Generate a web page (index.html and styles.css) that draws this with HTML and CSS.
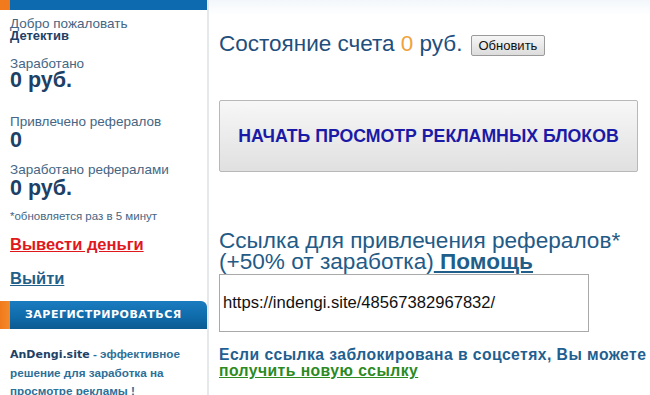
FILE: index.html
```
<!DOCTYPE html>
<html lang="ru">
<head>
<meta charset="utf-8">
<title>AnDengi</title>
<link rel="stylesheet" href="styles.css">
</head>
<body>
<div class="page">
  <aside class="sidebar">
    <div class="side-head"></div>
    <div class="side-body">
      <div class="label">Добро пожаловать</div>
      <div class="user">Детектив</div>
      <div class="label gap1">Заработано</div>
      <div class="value">0 руб.</div>
      <div class="label gap2">Привлечено рефералов</div>
      <div class="value v2">0</div>
      <div class="label gap3">Заработано рефералами</div>
      <div class="value v2">0 руб.</div>
      <div class="note">*обновляется раз в 5 минут</div>
      <a class="withdraw" href="#">Вывести деньги</a>
      <a class="logout" href="#">Выйти</a>
    </div>
    <div class="reg-head">ЗАРЕГИСТРИРОВАТЬСЯ</div>
    <p class="about"><b>AnDengi.site</b> - эффективное решение для заработка на просмотре рекламы !</p>
  </aside>
  <main class="main">
    <div class="balance">
      <span>Состояние счета <span class="zero">0</span> руб.</span>
      <button class="refresh" type="button">Обновить</button>
    </div>
    <button class="start" type="button">НАЧАТЬ ПРОСМОТР РЕКЛАМНЫХ БЛОКОВ</button>
    <div class="ref-title">Ссылка для привлечения рефералов*<br>(+50% от заработка)<a class="help" href="#"> Помощь</a></div>
    <div class="ref-box">https://indengi.site/48567382967832/</div>
    <div class="blocked">Если ссылка заблокирована в соцсетях, Вы можете<br><a class="newlink" href="#">получить новую ссылку</a></div>
  </main>
</div>
</body>
</html>
```

FILE: styles.css
```
* { box-sizing: border-box; }
html, body { margin: 0; padding: 0; background: #fff; }
body {
  font-family: "Liberation Sans", Arial, sans-serif;
  width: 650px;
  height: 395px;
  overflow: hidden;
}
.page {
  display: flex;
  align-items: flex-start;
  height: 395px;
  overflow: hidden;
}
.sidebar {
  width: 209px;
  flex: none;
  border-right: 2px solid #e6e9ec;
  height: 395px;
  display: flex;
  flex-direction: column;
}
.sidebar > * { flex-shrink: 0; }
.side-head {
  height: 10px;
  background: linear-gradient(to right, #f07a1c 0, #f07a1c 10px, #0d6aae 10px, #0d6aae 100%);
}
.side-body {
  display: flex;
  flex-direction: column;
  align-items: flex-start;
  padding: 7px 0 0 10px;
}
.label {
  font-size: 13.5px;
  line-height: 13px;
  color: #456684;
}
.user {
  font-size: 13px;
  font-weight: bold;
  line-height: 12px;
  color: #1d4166;
}
.gap1 { margin-top: 15px; }
.gap2 { margin-top: 25px; }
.gap3 { margin-top: 13px; }
.value {
  font-size: 21.5px;
  font-weight: bold;
  line-height: 20px;
  color: #1d4166;
}
.v2 { margin-top: 2px; }
.note {
  margin-top: 11px;
  font-size: 11.5px;
  line-height: 14px;
  color: #456684;
}
.withdraw {
  margin-top: 12px;
  font-size: 16.5px;
  font-weight: bold;
  line-height: 18px;
  color: #e0181c;
}
.logout {
  margin-top: 16px;
  font-size: 16.5px;
  font-weight: bold;
  line-height: 18px;
  color: #1f5f8a;
}
.reg-head {
  margin-top: 14px;
  height: 28px;
  border-radius: 0 6px 0 0;
  background:
    linear-gradient(to right, #f07a1c 0, #f48a2a 10px, transparent 10px),
    linear-gradient(to bottom, #1a7cc0 0, #0f6aa8 60%, #0b5a92 100%);
  color: #fff;
  font-family: "DejaVu Sans", Verdana, sans-serif;
  font-size: 11px;
  letter-spacing: 0.5px;
  font-weight: bold;
  line-height: 28px;
  padding-left: 25px;
}
.about {
  margin: 16px 0 0 0;
  padding: 0 10px;
  font-size: 11.7px;
  line-height: 18px;
  font-weight: bold;
  color: #2e6f98;
}
.about b {
  font-family: "DejaVu Sans", Verdana, sans-serif;
  font-size: 11px;
  color: #1d4166;
}

.main {
  flex: 1;
  padding: 0 0 0 10px;
  display: flex;
  flex-direction: column;
  align-items: flex-start;
  background: linear-gradient(to bottom, #f3f7fb 0, #fff 16px);
  height: 395px;
}
.main > * { flex-shrink: 0; }
.balance {
  margin-top: 32px;
  display: flex;
  align-items: center;
  gap: 8px;
  font-size: 22.5px;
  color: #1f4f7c;
  line-height: 24px;
}
.zero { color: #f0a23a; }
.refresh {
  font-family: "Liberation Sans", Arial, sans-serif;
  font-size: 13px;
  height: 21px;
  padding: 0 7px;
  border: 1px solid #9a9a9a;
  border-radius: 2px;
  background: linear-gradient(to bottom, #f6f6f6, #dcdcdc);
  color: #111;
  margin-top: 2px;
}
.start {
  margin-top: 44px;
  width: 419px;
  height: 72px;
  border: 1px solid #b8b8b8;
  border-radius: 2px;
  background: linear-gradient(to bottom, #f7f7f7, #e0e0e0);
  font-family: "Liberation Sans", Arial, sans-serif;
  font-size: 17.7px;
  font-weight: bold;
  color: #1a1aa6;
  padding: 0;
}
.ref-title {
  margin-top: 58px;
  font-size: 22.6px;
  line-height: 21px;
  color: #235a86;
}
.help {
  font-weight: bold;
  color: #1f5f8a;
}
.ref-box {
  margin-top: 2px;
  width: 370px;
  height: 58px;
  border: 1px solid #a9a9a9;
  font-size: 16.6px;
  color: #111;
  display: flex;
  align-items: center;
  padding-left: 3px;
}
.blocked {
  margin-top: 15px;
  font-size: 15.7px;
  letter-spacing: 0.45px;
  line-height: 16px;
  font-weight: bold;
  color: #1f6090;
  white-space: nowrap;
}
.newlink { color: #2b8a22; }
```
